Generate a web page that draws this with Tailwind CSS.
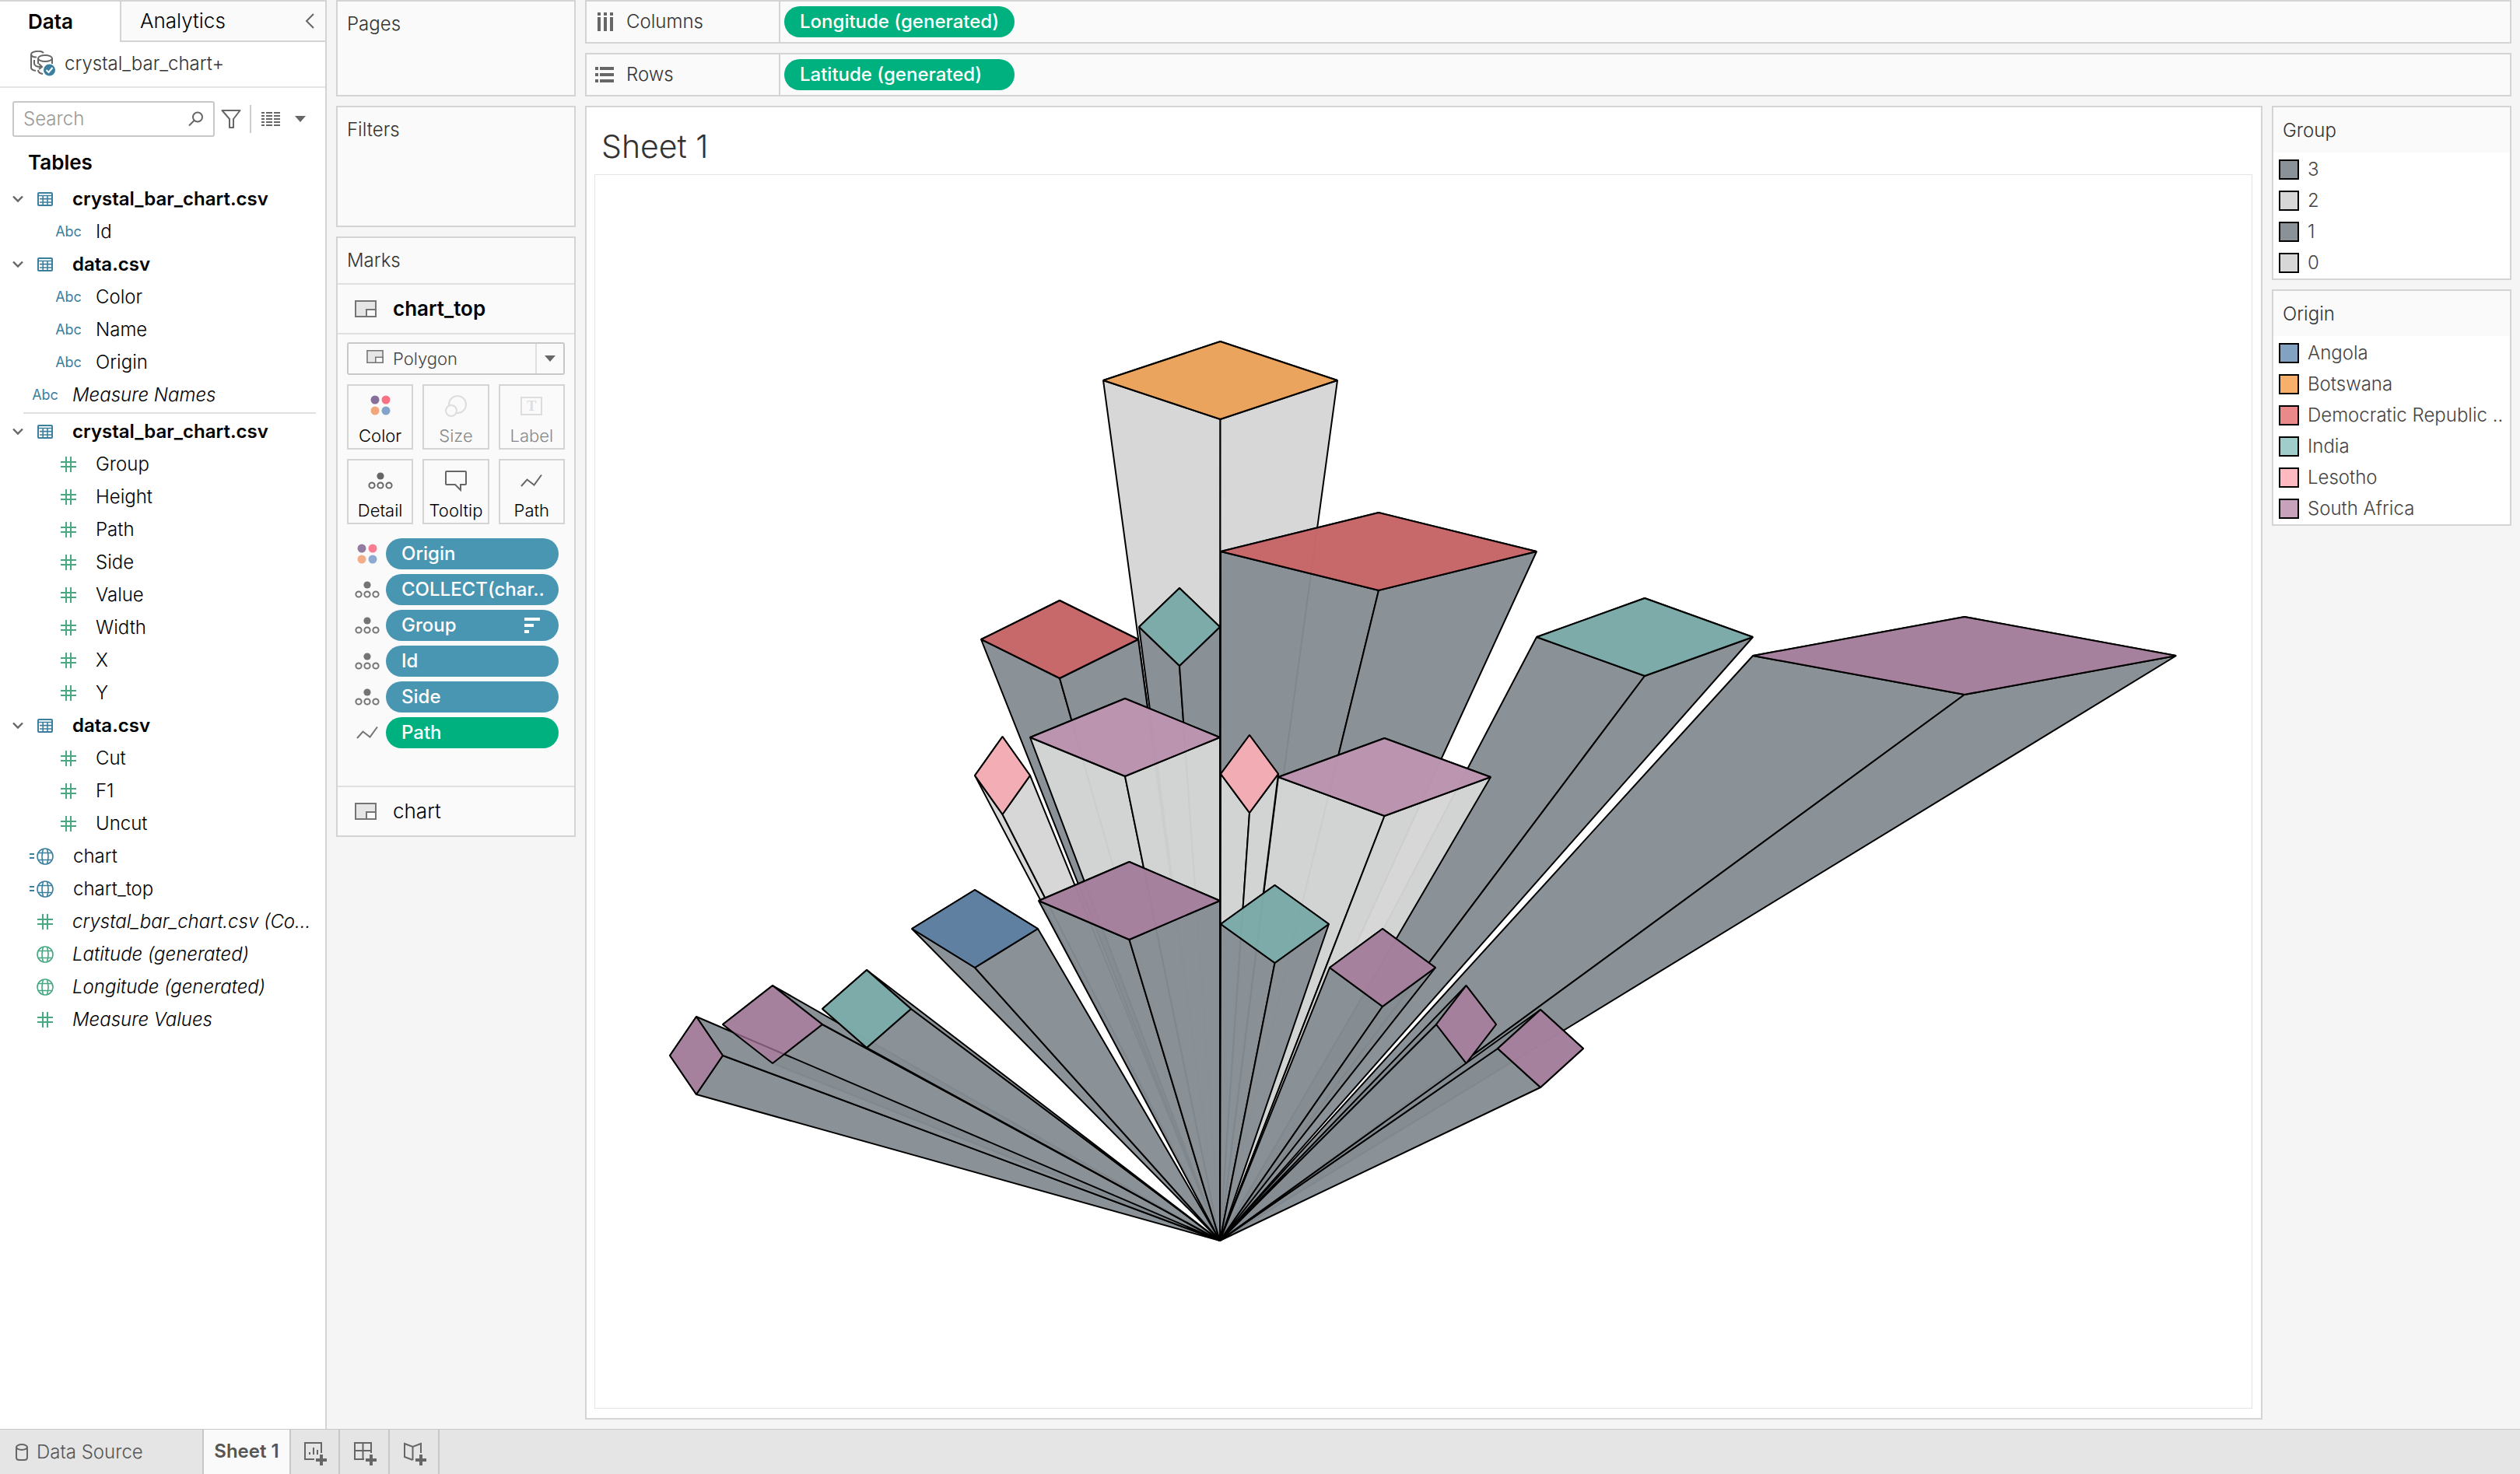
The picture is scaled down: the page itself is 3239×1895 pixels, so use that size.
<!DOCTYPE html>
<html lang="en">
<head>
<meta charset="utf-8">
<title>Sheet 1</title>
<script src="https://cdn.jsdelivr.net/npm/@tailwindcss/browser@4"></script>
</head>
<body class="flex min-h-screen flex-col bg-[#f5f5f5] font-['Inter',sans-serif] text-2xl leading-8 font-light text-black">

<svg class="hidden" aria-hidden="true">
  <symbol id="chevron" viewBox="0 0 14 10"><path d="M1 1.5l6 6 6-6" fill="none" stroke="#666" stroke-width="2.4"/></symbol>
  <symbol id="table" viewBox="0 0 20 18"><rect x="1" y="1" width="18" height="16" rx="1" fill="none" stroke="#3a7f9f" stroke-width="2"/><path d="M1 4.5h18M3 8.6h15M3 13h15M7.2 5v11M13 5v11" stroke="#3a7f9f" stroke-width="1.6"/></symbol>
  <symbol id="hash" viewBox="0 0 20 20"><path d="M7 0v20M13 0v20M0 7h20M0 13h20" stroke="#47a882" stroke-width="2"/></symbol>
  <symbol id="globe" viewBox="0 0 22 22"><g fill="none" stroke="currentColor" stroke-width="1.6"><circle cx="11" cy="11" r="10"/><path d="M2.500 6.500h17M2.500 15.500h17M8.500 1.500q-3 9.500 0 19M13.500 1.500q3 9.500 0 19"/></g></symbol>
  <symbol id="polygon" viewBox="0 0 28 22"><rect x="1" y="1" width="26" height="20" fill="#e6e6e6" stroke="#757575" stroke-width="2"/><rect x="15" y="12" width="12" height="9" fill="#fafafa" stroke="#757575" stroke-width="2"/></symbol>
  <symbol id="colors" viewBox="0 0 26 26"><circle cx="6" cy="6" r="5.500" fill="#876f99"/><circle cx="20" cy="6" r="5.500" fill="#fb7185"/><circle cx="6" cy="20" r="5.500" fill="#f3a67c"/><circle cx="20" cy="20" r="5.500" fill="#82a3cb"/></symbol>
  <symbol id="detail" viewBox="0 0 32 22"><circle cx="16" cy="5" r="4.600" fill="#666"/><g fill="none" stroke="#666" stroke-width="2"><circle cx="5" cy="17" r="3.600"/><circle cx="16" cy="17" r="3.600"/><circle cx="27" cy="17" r="3.600"/></g></symbol>
  <symbol id="path" viewBox="0 0 28 18"><path d="M1 16L8.500 7.500l9 7L27 1.500" fill="none" stroke="#666" stroke-width="2"/></symbol>
</svg>

<main class="flex grow">
  <!-- Data pane -->
  <aside class="flex w-[420px] shrink-0 flex-col border-t-2 border-r-2 border-[#d4d4d4] bg-white">
    <div class="flex h-[52px]">
      <button class="w-[154px] pl-[36px] text-left text-[26px] font-semibold">Data</button>
      <div class="flex grow items-center justify-between border-b-2 border-l-2 border-[#d4d4d4] bg-[#fafafa] pr-[14px] pl-[24px]">
        <button class="text-[26px]">Analytics</button>
        <button aria-label="Collapse pane"><svg class="h-5 w-3" viewBox="0 0 12 20"><path d="M11 1L2 10l9 9" fill="none" stroke="#666" stroke-width="2"/></svg></button>
      </div>
    </div>
    <button class="flex h-[59px] items-center gap-[11px] border-b-2 border-[#e4e4e4] pb-[2px] pl-[39px] text-[#333]">
      <svg class="h-[33px] w-[33px]" viewBox="0 0 33 33"><g fill="none" stroke="#666" stroke-width="2"><path d="M17 3C13-1 1 1 1 5v17q0 3 6 4M1 5q1 4 7 3.500M5 12v5q1 4 8 4M11 17l4 4-4 3"/><ellipse cx="19" cy="10" rx="9" ry="4"/><path d="M10 10v7M28 10v7M10 25q0 4 6 5"/></g><circle cx="24.500" cy="25" r="7.500" fill="#3a7f9f"/><path d="M20.500 25l3 3 5-6" fill="none" stroke="#fff" stroke-width="2"/></svg>
      <span>crystal_bar_chart+</span>
    </button>
    <div class="mt-[17px] flex items-center pl-4">
      <label class="flex h-[46px] w-[260px] items-center rounded-[3px] border-2 border-[#c8c8c8] px-[12px]">
        <input type="text" aria-label="Search fields" placeholder="Search" class="w-full min-w-0 grow outline-none placeholder:text-[#999]">
        <svg class="h-5 w-5 shrink-0" viewBox="0 0 20 20"><g fill="none" stroke="#666" stroke-width="2"><circle cx="12" cy="7.500" r="6"/><path d="M7.500 12L1 18.500"/></g></svg>
      </label>
      <button aria-label="Filter fields" class="ml-2"><svg class="h-[26px] w-[26px]" viewBox="0 0 26 26"><path d="M1.500 2h23l-8.500 11v11h-5V13z" fill="none" stroke="#666" stroke-width="2" stroke-linejoin="round"/></svg></button>
      <span class="ml-[11px] h-9 w-[2px] bg-[#ccc]"></span>
      <button aria-label="View options" class="ml-[13px] flex items-center gap-[19px]">
        <svg class="h-5 w-6" viewBox="0 0 24 20"><g stroke="#666" stroke-width="2"><path d="M0 2h24M0 6h24M0 10h24M0 14h24M0 18h24"/></g><path d="M5 0v20M15 0v20" stroke="#fff" stroke-width="2"/></svg>
        <svg class="h-2 w-[14px]" viewBox="0 0 14 8"><path d="M0 0h14L7 8z" fill="#666"/></svg>
      </button>
    </div>
    <h2 class="mt-[6px] flex h-[53px] items-center pl-[36px] text-[26px] font-semibold">Tables</h2>

    <ul>
      <li class="flex h-[42px] items-center pl-4"><svg class="mr-[11px] h-[10px] w-[14px]"><use href="#chevron"/></svg><span class="mr-[18px] flex w-[34px] justify-center"><svg class="h-[18px] w-5"><use href="#table"/></svg></span><span class="font-semibold">crystal_bar_chart.csv</span></li>
      <li class="flex h-[42px] items-center pl-[71px]"><span class="mr-[18px] w-[34px] text-center text-lg font-normal text-[#3a7f9f]">Abc</span>Id</li>
      <li class="flex h-[42px] items-center pl-4"><svg class="mr-[11px] h-[10px] w-[14px]"><use href="#chevron"/></svg><span class="mr-[18px] flex w-[34px] justify-center"><svg class="h-[18px] w-5"><use href="#table"/></svg></span><span class="font-semibold">data.csv</span></li>
      <li class="flex h-[42px] items-center pl-[71px]"><span class="mr-[18px] w-[34px] text-center text-lg font-normal text-[#3a7f9f]">Abc</span>Color</li>
      <li class="flex h-[42px] items-center pl-[71px]"><span class="mr-[18px] w-[34px] text-center text-lg font-normal text-[#3a7f9f]">Abc</span>Name</li>
      <li class="flex h-[42px] items-center pl-[71px]"><span class="mr-[18px] w-[34px] text-center text-lg font-normal text-[#3a7f9f]">Abc</span>Origin</li>
      <li class="flex h-[42px] items-center pl-[41px]"><span class="mr-[18px] w-[34px] text-center text-lg font-normal text-[#3a7f9f]">Abc</span><i>Measure Names</i></li>
    </ul>
    <hr class="mt-px mr-3 mb-[2px] ml-[30px] border-t-2 border-[#e0e0e0]">
    <ul>
      <li class="flex h-[42px] items-center pl-4"><svg class="mr-[11px] h-[10px] w-[14px]"><use href="#chevron"/></svg><span class="mr-[18px] flex w-[34px] justify-center"><svg class="h-[18px] w-5"><use href="#table"/></svg></span><span class="font-semibold">crystal_bar_chart.csv</span></li>
      <li class="flex h-[42px] items-center pl-[71px]"><span class="mr-[18px] flex w-[34px] justify-center"><svg class="h-5 w-5"><use href="#hash"/></svg></span>Group</li>
      <li class="flex h-[42px] items-center pl-[71px]"><span class="mr-[18px] flex w-[34px] justify-center"><svg class="h-5 w-5"><use href="#hash"/></svg></span>Height</li>
      <li class="flex h-[42px] items-center pl-[71px]"><span class="mr-[18px] flex w-[34px] justify-center"><svg class="h-5 w-5"><use href="#hash"/></svg></span>Path</li>
      <li class="flex h-[42px] items-center pl-[71px]"><span class="mr-[18px] flex w-[34px] justify-center"><svg class="h-5 w-5"><use href="#hash"/></svg></span>Side</li>
      <li class="flex h-[42px] items-center pl-[71px]"><span class="mr-[18px] flex w-[34px] justify-center"><svg class="h-5 w-5"><use href="#hash"/></svg></span>Value</li>
      <li class="flex h-[42px] items-center pl-[71px]"><span class="mr-[18px] flex w-[34px] justify-center"><svg class="h-5 w-5"><use href="#hash"/></svg></span>Width</li>
      <li class="flex h-[42px] items-center pl-[71px]"><span class="mr-[18px] flex w-[34px] justify-center"><svg class="h-5 w-5"><use href="#hash"/></svg></span>X</li>
      <li class="flex h-[42px] items-center pl-[71px]"><span class="mr-[18px] flex w-[34px] justify-center"><svg class="h-5 w-5"><use href="#hash"/></svg></span>Y</li>
      <li class="flex h-[42px] items-center pl-4"><svg class="mr-[11px] h-[10px] w-[14px]"><use href="#chevron"/></svg><span class="mr-[18px] flex w-[34px] justify-center"><svg class="h-[18px] w-5"><use href="#table"/></svg></span><span class="font-semibold">data.csv</span></li>
      <li class="flex h-[42px] items-center pl-[71px]"><span class="mr-[18px] flex w-[34px] justify-center"><svg class="h-5 w-5"><use href="#hash"/></svg></span>Cut</li>
      <li class="flex h-[42px] items-center pl-[71px]"><span class="mr-[18px] flex w-[34px] justify-center"><svg class="h-5 w-5"><use href="#hash"/></svg></span>F1</li>
      <li class="flex h-[42px] items-center pl-[71px]"><span class="mr-[18px] flex w-[34px] justify-center"><svg class="h-5 w-5"><use href="#hash"/></svg></span>Uncut</li>
      <li class="flex h-[42px] items-center pl-[38px]"><svg class="h-2 w-[7px]" viewBox="0 0 7 8"><path d="M0 1h6M0 6h6" stroke="#3a7f9f" stroke-width="2"/></svg><svg class="mr-[25px] ml-[2px] h-[22px] w-[22px] text-[#3a7f9f]"><use href="#globe"/></svg>chart</li>
      <li class="flex h-[42px] items-center pl-[38px]"><svg class="h-2 w-[7px]" viewBox="0 0 7 8"><path d="M0 1h6M0 6h6" stroke="#3a7f9f" stroke-width="2"/></svg><svg class="mr-[25px] ml-[2px] h-[22px] w-[22px] text-[#3a7f9f]"><use href="#globe"/></svg>chart_top</li>
      <li class="flex h-[42px] items-center pl-[41px]"><span class="mr-[18px] flex w-[34px] justify-center"><svg class="h-5 w-5"><use href="#hash"/></svg></span><i>crystal_bar_chart.csv (Co...</i></li>
      <li class="flex h-[42px] items-center pl-[41px]"><span class="mr-[18px] flex w-[34px] justify-center"><svg class="h-[22px] w-[22px] text-[#47a882]"><use href="#globe"/></svg></span><i>Latitude (generated)</i></li>
      <li class="flex h-[42px] items-center pl-[41px]"><span class="mr-[18px] flex w-[34px] justify-center"><svg class="h-[22px] w-[22px] text-[#47a882]"><use href="#globe"/></svg></span><i>Longitude (generated)</i></li>
      <li class="flex h-[42px] items-center pl-[41px]"><span class="mr-[18px] flex w-[34px] justify-center"><svg class="h-5 w-5"><use href="#hash"/></svg></span><i>Measure Values</i></li>
    </ul>
  </aside>

  <!-- Cards -->
  <div class="ml-3 flex w-[308px] shrink-0 flex-col gap-3">
    <section class="h-[124px] border-2 border-[#d4d4d4] bg-[#fafafa] px-[12px] py-[13px] text-[#333]"><h2>Pages</h2></section>
    <section class="h-[156px] border-2 border-[#d4d4d4] bg-[#fafafa] px-[12px] py-[13px] text-[#333]"><h2>Filters</h2></section>
    <section class="border-2 border-[#d4d4d4] bg-[#fafafa]">
      <h2 class="flex h-[60px] items-center border-b-2 border-[#e0e0e0] pl-[12px] text-[#333]">Marks</h2>
      <button class="flex h-[64px] w-full items-center gap-[21px] border-b-2 border-[#e0e0e0] pl-[22px]"><svg class="h-[22px] w-7"><use href="#polygon"/></svg><span class="text-[26px] font-semibold">chart_top</span></button>
      <div class="px-3 pt-[10px] pb-12">
        <div class="relative text-[#444]">
          <svg class="absolute top-[10px] left-[25px] h-[17px] w-[22px]"><use href="#polygon"/></svg>
          <select aria-label="Mark type" class="h-[42px] w-full appearance-none rounded-[3px] border-2 border-[#c8c8c8] pl-[57px] text-[22px]"><option>Polygon</option></select>
          <span class="pointer-events-none absolute inset-y-[2px] right-[2px] flex w-[36px] items-center justify-center border-l-2 border-[#e0e0e0]"><svg class="h-2 w-[14px]" viewBox="0 0 14 8"><path d="M0 0h14L7 8z" fill="#666"/></svg></span>
        </div>
        <div class="mt-3 grid grid-cols-3 gap-3 text-[22px]">
          <button class="flex h-[84px] flex-col items-center justify-between border-2 border-[#d4d4d4] pt-[12px] leading-8"><svg class="h-[26px] w-[26px]"><use href="#colors"/></svg>Color</button>
          <button disabled class="flex h-[84px] flex-col items-center justify-between border-2 border-[#d4d4d4] pt-[12px] leading-8 text-[#888]"><svg class="h-7 w-7" viewBox="0 0 28 28"><g fill="#fafafa" stroke="#ddd" stroke-width="2"><circle cx="16" cy="12" r="11"/><circle cx="8" cy="20" r="7"/></g></svg>Size</button>
          <button disabled class="flex h-[84px] flex-col items-center justify-between border-2 border-[#d4d4d4] pt-[14px] leading-8 text-[#888]"><span class="flex h-6 w-7 items-center justify-center border-2 border-[#ddd] font-['Liberation_Serif',serif] text-lg font-bold text-[#ddd]">T</span>Label</button>
          <button class="flex h-[84px] flex-col items-center justify-between border-2 border-[#d4d4d4] pt-[15px] leading-8"><svg class="h-[22px] w-8"><use href="#detail"/></svg>Detail</button>
          <button class="flex h-[84px] flex-col items-center justify-between border-2 border-[#d4d4d4] pt-[12px] leading-8"><svg class="h-7 w-7" viewBox="0 0 28 28"><path d="M2 2h24q1 0 1 1v15q0 1-1 1h-6v7l-7-7H2q-1 0-1-1V3q0-1 1-1z" fill="none" stroke="#666" stroke-width="2"/></svg>Tooltip</button>
          <button class="flex h-[84px] flex-col items-center justify-between border-2 border-[#d4d4d4] pt-[17px] leading-8"><svg class="h-[18px] w-7"><use href="#path"/></svg>Path</button>
        </div>
        <ul class="mt-[18px] flex flex-col gap-[6px] pr-2 pl-[10px] font-medium text-white">
          <li class="flex items-center"><span class="flex w-[40px] justify-center pr-2 opacity-90"><svg class="h-[26px] w-[26px]"><use href="#colors"/></svg></span><button class="h-10 grow rounded-[20px] bg-[#4996b2] px-[20px] text-left">Origin</button></li>
          <li class="flex items-center"><span class="flex w-[40px] justify-center pr-2 opacity-90"><svg class="h-[22px] w-8 shrink-0"><use href="#detail"/></svg></span><button class="h-10 grow rounded-[20px] bg-[#4996b2] pl-[20px] text-left whitespace-nowrap">COLLECT(char..</button></li>
          <li class="flex items-center"><span class="flex w-[40px] justify-center pr-2 opacity-90"><svg class="h-[22px] w-8 shrink-0"><use href="#detail"/></svg></span><button class="flex h-10 grow items-center justify-between rounded-[20px] bg-[#4996b2] pr-6 pl-[20px] text-left">Group<svg class="h-5 w-5" viewBox="0 0 20 20"><path d="M0 2h20M0 10h12M0 18h6" stroke="#fff" stroke-width="4"/></svg></button></li>
          <li class="flex items-center"><span class="flex w-[40px] justify-center pr-2 opacity-90"><svg class="h-[22px] w-8 shrink-0"><use href="#detail"/></svg></span><button class="h-10 grow rounded-[20px] bg-[#4996b2] px-[20px] text-left">Id</button></li>
          <li class="flex items-center"><span class="flex w-[40px] justify-center pr-2 opacity-90"><svg class="h-[22px] w-8 shrink-0"><use href="#detail"/></svg></span><button class="h-10 grow rounded-[20px] bg-[#4996b2] px-[20px] text-left">Side</button></li>
          <li class="flex items-center"><span class="flex w-[40px] justify-center pr-2 opacity-90"><svg class="h-[18px] w-7"><use href="#path"/></svg></span><button class="h-10 grow rounded-[20px] bg-[#00b180] px-[20px] text-left">Path</button></li>
        </ul>
      </div>
      <button class="flex h-[64px] w-full items-center gap-[21px] border-t-2 border-[#e0e0e0] pl-[22px] text-[26px]"><svg class="h-[22px] w-7"><use href="#polygon"/></svg>chart</button>
    </section>
  </div>

  <!-- Shelves, view and legends -->
  <div class="mr-[11px] mb-3 ml-3 flex grow flex-col gap-3">
    <div class="flex h-14 border-2 border-[#d4d4d4] bg-[#fafafa]">
      <div class="flex w-[249px] items-center gap-4 border-r-2 border-[#d4d4d4] pl-[13px] text-[#333]"><svg class="h-6 w-[22px]" viewBox="0 0 22 24"><path d="M3 0v4M11 0v4M19 0v4M3 6v18M11 6v18M19 6v18" stroke="#666" stroke-width="4"/></svg><h2>Columns</h2></div>
      <button class="my-[6px] ml-[5px] w-[296px] rounded-[20px] bg-[#00b180] px-[20px] text-left font-medium whitespace-nowrap text-white">Longitude (generated)</button>
    </div>
    <div class="flex h-14 border-2 border-[#d4d4d4] bg-[#fafafa]">
      <div class="flex w-[249px] items-center gap-4 border-r-2 border-[#d4d4d4] pl-[11px] text-[#333]"><svg class="h-5 w-6" viewBox="0 0 24 20"><path d="M0 2h4M6 2h18M0 10h4M6 10h18M0 18h4M6 18h18" stroke="#666" stroke-width="4"/></svg><h2>Rows</h2></div>
      <button class="my-[6px] ml-[5px] w-[296px] rounded-[20px] bg-[#00b180] px-[20px] text-left font-medium whitespace-nowrap text-white">Latitude (generated)</button>
    </div>
    <div class="flex grow gap-3">
      <section class="flex grow flex-col border-2 border-[#d4d4d4] bg-white pr-[11px] pb-3 pl-[10px]">
        <h1 class="flex h-[86px] items-center px-[9px] pt-[14px] text-[41px] text-[#333]">Sheet 1</h1>
        <div class="flex grow border border-[#e4e4e4]">
          <svg id="view" class="h-auto w-full" viewBox="765 224 2129 1585" stroke="#000" stroke-width="2" stroke-linejoin="bevel" role="img" aria-label="Crystal bar chart"></svg>
        </div>
      </section>
      <aside class="flex w-[308px] shrink-0 flex-col gap-3 text-[#444]">
        <section class="border-2 border-[#d4d4d4] bg-white">
          <h2 class="flex h-[58px] items-center bg-[#fafafa] pt-[2px] pl-3 text-[#333]">Group</h2>
          <ul class="pt-[2px]">
            <li class="flex h-10 items-center gap-[11px] pl-[7px]"><span class="size-[26px] border-2 border-black bg-[#8a9298]"></span>3</li>
            <li class="flex h-10 items-center gap-[11px] pl-[7px]"><span class="size-[26px] border-2 border-black bg-[#d7d7d7]"></span>2</li>
            <li class="flex h-10 items-center gap-[11px] pl-[7px]"><span class="size-[26px] border-2 border-black bg-[#8a9298]"></span>1</li>
            <li class="flex h-10 items-center gap-[11px] pl-[7px]"><span class="size-[26px] border-2 border-black bg-[#d7d7d7]"></span>0</li>
          </ul>
        </section>
        <section class="border-2 border-[#d4d4d4] bg-white">
          <h2 class="flex h-[58px] items-center bg-[#fafafa] pt-[2px] pl-3 text-[#333]">Origin</h2>
          <ul class="pt-[2px] whitespace-nowrap">
            <li class="flex h-10 items-center gap-[11px] pl-[7px]"><span class="size-[26px] border-2 border-black bg-[#83a1c1]"></span>Angola</li>
            <li class="flex h-10 items-center gap-[11px] pl-[7px]"><span class="size-[26px] border-2 border-black bg-[#f6b06b]"></span>Botswana</li>
            <li class="flex h-10 items-center gap-[11px] pl-[7px]"><span class="size-[26px] border-2 border-black bg-[#ea8989]"></span>Democratic Republic ..</li>
            <li class="flex h-10 items-center gap-[11px] pl-[7px]"><span class="size-[26px] border-2 border-black bg-[#9fcdc9]"></span>India</li>
            <li class="flex h-10 items-center gap-[11px] pl-[7px]"><span class="size-[26px] border-2 border-black bg-[#ffbac1]"></span>Lesotho</li>
            <li class="flex h-10 items-center gap-[11px] pl-[7px]"><span class="size-[26px] border-2 border-black bg-[#c8a2bd]"></span>South Africa</li>
          </ul>
        </section>
      </aside>
    </div>
  </div>
</main>

<footer class="flex h-[59px] shrink-0 border-t border-[#c8c8c8] bg-[#e5e5e5] text-[#555]">
  <button class="flex w-[260px] items-center gap-[11px] pl-5"><svg class="h-[22px] w-4" viewBox="0 0 16 22"><g fill="none" stroke="#666" stroke-width="2"><ellipse cx="8" cy="4.500" rx="7" ry="3.500"/><path d="M1 4.500v13q0 3.500 4 3.500h6q4 0 4-3.500v-13"/></g></svg><span>Data Source</span></button>
  <button class="w-[114px] border-x-2 border-[#c8c8c8] bg-[#fafafa] pb-[2px] text-center font-semibold whitespace-nowrap">Sheet 1</button>
  <button aria-label="New worksheet" class="flex w-[63px] items-center justify-center border-r-2 border-[#c8c8c8] pt-1 pl-[2px]"><svg class="h-[30px] w-[30px]" viewBox="0 0 30 30"><path d="M13 22H1V1h21v13M7 16v-3M12 16V7M17 16v-6" fill="none" stroke="#666" stroke-width="2"/><path d="M22 16v14M15 23h14" stroke="#666" stroke-width="4"/></svg></button>
  <button aria-label="New dashboard" class="flex w-[64px] items-center justify-center border-r-2 border-[#c8c8c8] pt-1 pl-1"><svg class="h-[30px] w-[30px]" viewBox="0 0 30 30"><path d="M13 22H1V1h21v13M1 11h21M11.500 1v21" fill="none" stroke="#666" stroke-width="2"/><path d="M22 16v14M15 23h14" stroke="#666" stroke-width="4"/></svg></button>
  <button aria-label="New story" class="flex w-[64px] items-center justify-center border-r-2 border-[#c8c8c8] pt-1 pl-1"><svg class="h-[30px] w-[30px]" viewBox="0 0 30 30"><path d="M11.500 23L1 19V2l10.500 4L22 2v12M11.500 6v17" fill="none" stroke="#666" stroke-width="2"/><path d="M22 16v14M15 23h14" stroke="#666" stroke-width="4"/></svg></button>
</footer>

<script>
// Each crystal: left x, right x, middle y of its top, group, origin. Listed back to front.
const crystals = [
  [1418, 1719, 488, 0, 'Botswana'],
  [1261, 1463, 821, 1, 'Congo'],
  [1464, 1568, 805, 1, 'India'],
  [1569, 1975, 708, 1, 'Congo'],
  [1975, 2253, 818, 1, 'India'],
  [2253, 2797, 842, 1, 'South Africa'],
  [1253, 1324, 996, 2, 'Lesotho'],
  [1324, 1568, 947, 2, 'South Africa'],
  [1643, 1916, 998, 2, 'South Africa'],
  [1569, 1643, 994, 2, 'Lesotho'],
  [929, 1057, 1316, 3, 'South Africa'],
  [861, 929, 1356, 3, 'South Africa'],
  [1057, 1171, 1296, 3, 'India'],
  [1172, 1334, 1193, 3, 'Angola'],
  [1335, 1568, 1157, 3, 'South Africa'],
  [1569, 1708, 1187, 3, 'India'],
  [1709, 1845, 1243, 3, 'South Africa'],
  [1846, 1923, 1316, 3, 'South Africa'],
  [1925, 2035, 1347, 3, 'South Africa'],
];
const originColor = {'Angola': '#4e79a7', 'Botswana': '#f28e2b', 'Congo': '#e15759', 'India': '#76b7b2', 'Lesotho': '#ff9da7', 'South Africa': '#b07aa1'};
const apex = [1568, 1594], half = 50;
const polygon = (points, fill, opacity) => `<polygon points="${points.join(' ')}" fill="${fill}" fill-opacity="${opacity}"/>`;
let sides = '', tops = '';
for (const [l, r, y, group, origin] of crystals) {
  const cx = (l + r) / 2;
  const top = [[l, y], [cx, y + half], [r, y], [cx, y - half]];
  const fill = group % 2 ? '#858d93' : '#d5d5d5';
  sides += polygon(top, fill, 0.96);
  top.forEach((a, i) => {
    const b = top[(i + 1) % 4];
    const turn = (b[0] - a[0]) * (apex[1] - a[1]) - (b[1] - a[1]) * (apex[0] - a[0]);
    if (turn > 0) sides += polygon([a, b, apex], fill, 0.96);
  });
  tops += polygon(top, originColor[origin], 0.7);
}
document.getElementById('view').innerHTML = sides + tops;
</script>
</body>
</html>
